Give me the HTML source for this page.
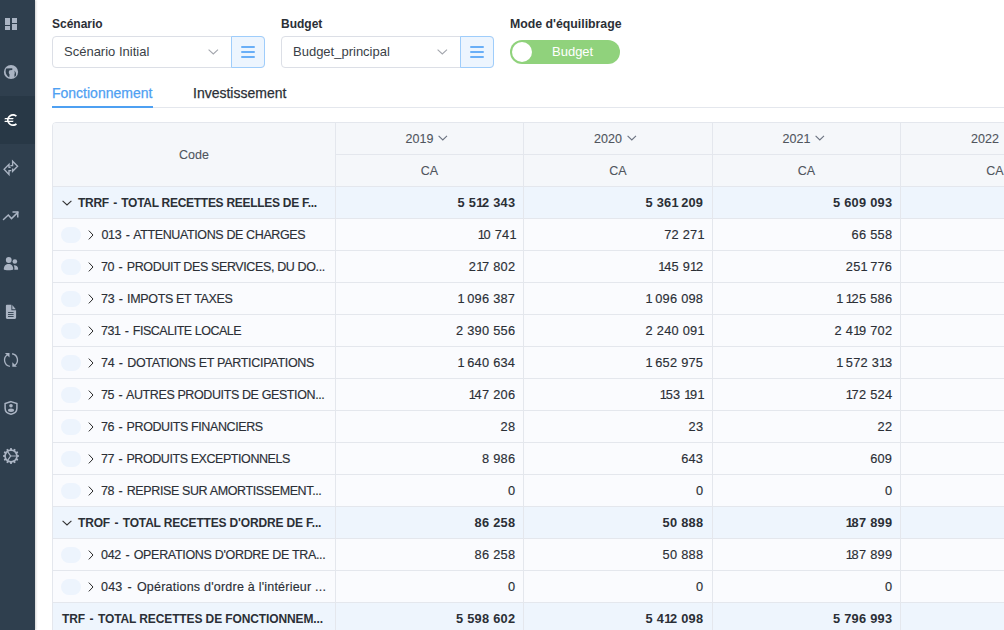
<!DOCTYPE html>
<html><head><meta charset="utf-8">
<style>
*{box-sizing:border-box;margin:0;padding:0}
html,body{width:1004px;height:630px;overflow:hidden;background:#fff;font-family:"Liberation Sans",sans-serif;color:#2b2f36}
#side{position:absolute;left:0;top:0;width:35px;height:630px;background:#2f3f4e;box-shadow:1px 0 2px rgba(0,0,0,.18)}
#side .act{position:absolute;left:0;top:96px;width:35px;height:48px;background:#283846}
#side svg{position:absolute;left:-1px;width:24px;height:24px}
.lbl{position:absolute;top:16px;font-size:12px;font-weight:bold;color:#2b2f36;line-height:16px}
.sel{position:absolute;top:36px;height:32px;width:213px;border:1px solid #dcdfe6;border-radius:4px;background:#fff}
.sel .txt{position:absolute;left:11px;top:0;line-height:30px;font-size:13px;color:#3a3f47}
.sel .chv{position:absolute;left:154.5px;top:12px}
.sel .btn{position:absolute;left:178px;top:-1px;width:34px;height:32px;border:1px solid #9fcdfb;border-radius:0 4px 4px 0;background:#edf5fe}
.sel .btn i{position:absolute;left:8.5px;width:14px;height:1.75px;background:#6aaff7;border-radius:1px}
.toggle{position:absolute;left:510px;top:40px;width:110px;height:24px;border-radius:12px;background:#90d27c}
.toggle .knob{position:absolute;left:2px;top:2px;width:20px;height:20px;border-radius:50%;background:#fff}
.toggle .t{position:absolute;left:42px;top:0;line-height:24px;color:#fff;font-size:13px}
.tab{position:absolute;top:84px;font-size:14px;line-height:18px;color:#2b2f36;-webkit-text-stroke:0.25px currentColor}
#tabline{position:absolute;left:52px;top:107px;width:952px;height:1px;background:#e4e7ed}
#tabact{position:absolute;left:52px;top:106px;width:101px;height:2px;background:#4ea0f2}
#tbl{position:absolute;left:52px;top:122px;width:1100px;height:600px;border:1px solid #e4e7ed;border-radius:4px;overflow:hidden;background:#fff}
.row{position:absolute;left:0;width:1100px;height:32px;border-bottom:1px solid #e4e7ed}
.vl{position:absolute;top:0;width:1px;height:600px;background:#e4e7ed}
.c{position:absolute;top:0;height:31px;line-height:33.5px;font-size:12.5px;white-space:nowrap;color:#2b2f36;-webkit-text-stroke:0.15px #2b2f36}
.c.b{-webkit-text-stroke:0}
.h{position:absolute;height:31px;line-height:32px;font-size:12.5px;white-space:nowrap;text-align:center;color:#50555d;-webkit-text-stroke:0.1px #50555d}
.h .yc{margin-left:5px;vertical-align:2px}
.num{text-align:right;font-size:12.8px;letter-spacing:0.25px;line-height:32px}
.one{font-style:normal;letter-spacing:-1.3px}
.b{font-weight:bold}
.pill{position:absolute;left:8px;width:20px;height:16px;border-radius:8px;background:#edf4fd}
.chev{position:absolute;left:35px}
.chevd{position:absolute;left:9px}
</style></head><body>
<div id="side">
 <div class="act"></div>
 <!-- dashboard -->
 <svg style="top:12px" viewBox="0 0 24 24"><path fill="#aab4c3" d="M6 6h5v7H6zM13 6h5v5h-5zM6 14h5v4H6zM13 12h5v6h-5z"/></svg>
 <!-- globe -->
 <svg style="top:60px" viewBox="0 0 24 24"><circle cx="12" cy="12" r="7.1" fill="#aab4c3"/><g fill="#2f3f4e"><path d="M7.2 8.6L13.3 8.2V9.9L10.6 10.2C9.4 11.3 9.6 13.3 10.6 14.4L10.3 17.2C8.3 16.3 6.7 14 6.6 11.4 6.6 10.4 6.8 9.4 7.2 8.6z"/><path d="M15.3 10.4C16.6 11.5 17.3 13.3 17 15.2 16.7 16.1 16.3 16.6 15.5 17.1L15.4 14.6C15.9 13.4 15.9 12.1 15.3 10.4z"/></g></svg>
 <!-- euro -->
 <svg style="top:108px" viewBox="0 0 24 24"><g transform="translate(4 4) scale(0.6667)"><path fill="#ffffff" d="M15 18.5c-2.51 0-4.68-1.42-5.76-3.5H15l1-2H8.58c-.05-.33-.08-.66-.08-1s.03-.67.08-1H15l1-2H9.24C10.32 6.92 12.5 5.5 15 5.5c1.61 0 3.09.59 4.23 1.57L21 5.3C19.41 3.87 17.3 3 15 3c-3.92 0-7.24 2.51-8.48 6H3l-1 2h4.06c-.04.33-.06.66-.06 1s.02.67.06 1H3l-1 2h4.52c1.24 3.49 4.56 6 8.48 6 2.31 0 4.41-.87 6-2.3l-1.78-1.77c-1.13.98-2.6 1.57-4.22 1.57z"/></g></svg>
 <!-- exchange -->
 <svg style="top:156px" viewBox="0 0 24 24"><g fill="none" stroke="#aab4c3" stroke-width="1.35" stroke-linejoin="miter"><path d="M11.4 9.6H13.6V5.2L18.6 10.3 13.6 15.3V12.4"/><path d="M12.3 14.6H10V18.5L5.1 13.3 10 8.3V11.3H11.6"/></g></svg>
 <!-- trending up -->
 <svg style="top:204px" viewBox="0 0 24 24"><g fill="none" stroke="#aab4c3" stroke-width="1.5" stroke-linecap="round"><path d="M4.5 15.5L9.3 11 12.5 14.6 18.8 8.4"/></g><path fill="#aab4c3" d="M13.5 7.3H19.5V13.5H18V8.8H13.5z"/></svg>
 <!-- users -->
 <svg style="top:252px" viewBox="0 0 24 24"><g fill="#aab4c3"><circle cx="9.75" cy="8" r="2.9"/><path d="M4.8 17.5C4.8 13.8 7 12.1 9.6 12.1S14.2 13.8 14.2 17.5C14.2 18.6 4.8 18.6 4.8 17.5z"/><circle cx="15.85" cy="9.5" r="2.3"/><path d="M14.7 13.3C17.3 13.1 19.2 14.5 19.2 17.2 19.2 17.8 17.6 17.9 15.3 17.8 15.6 16.2 15.4 14.5 14.7 13.3z"/></g></svg>
 <!-- document -->
 <svg style="top:300px" viewBox="0 0 24 24"><path fill="#aab4c3" d="M7.8 4.8H12.4V10.2H17.1V17.6C17.1 18.5 16.6 19 15.9 19H8.1C7.4 19 6.9 18.5 6.9 17.6V5.8C6.9 5.2 7.3 4.8 7.8 4.8zM13.3 5.1L16.8 9.3H13.3z"/><g stroke="#2f3f4e" stroke-width="0.9"><path d="M9 12.5H14.6M9 14.5H14.6M9 16.5H14.6"/></g></svg>
 <!-- sync -->
 <svg style="top:348px" viewBox="0 0 24 24"><g fill="none" stroke="#aab4c3" stroke-width="1.3"><path d="M8.77 6.51A6.45 6.45 0 0 0 10.88 18.45"/><path d="M13.12 5.75A6.45 6.45 0 0 1 15.23 17.69"/></g><path fill="#aab4c3" d="M5.9 4.9H10.5V9.5z"/><path fill="#aab4c3" d="M17.9 18.8H13.3V14.2z"/></svg>
 <!-- shield user -->
 <svg style="top:396px" viewBox="0 0 24 24"><path fill="none" stroke="#aab4c3" stroke-width="1.5" d="M12 5.6L17.9 7.6V12.3C17.9 15.4 15.4 17.6 12 18.3 8.6 17.6 6.1 15.4 6.1 12.3V7.6z"/><circle cx="12" cy="9.8" r="1.8" fill="#aab4c3"/><ellipse cx="12" cy="14.2" rx="3" ry="1.7" fill="#aab4c3"/></svg>
 <!-- gear -->
 <svg style="top:444px" viewBox="0 0 24 24"><path fill="#aab4c3" d="M10.95 5.38 L11.23 4.04 L12.77 4.04 L13.05 5.38 L14.40 5.75 L15.32 4.72 L16.65 5.49 L16.22 6.79 L17.21 7.78 L18.51 7.35 L19.28 8.68 L18.25 9.60 L18.62 10.95 L19.96 11.23 L19.96 12.77 L18.62 13.05 L18.25 14.40 L19.28 15.32 L18.51 16.65 L17.21 16.22 L16.22 17.21 L16.65 18.51 L15.32 19.28 L14.40 18.25 L13.05 18.62 L12.77 19.96 L11.23 19.96 L10.95 18.62 L9.60 18.25 L8.68 19.28 L7.35 18.51 L7.78 17.21 L6.79 16.22 L5.49 16.65 L4.72 15.32 L5.75 14.40 L5.38 13.05 L4.04 12.77 L4.04 11.23 L5.38 10.95 L5.75 9.60 L4.72 8.68 L5.49 7.35 L6.79 7.78 L7.78 6.79 L7.35 5.49 L8.68 4.72 L9.60 5.75z"/><circle cx="12" cy="12" r="5.1" fill="#2f3f4e"/><path stroke="#8994a2" stroke-width="1.3" d="M11.4 12H17.2"/><path fill="none" stroke="#aab4c3" stroke-width="1.3" d="M8.6 7.6L11.6 12 8.6 16.4"/></svg>
</div>

<div class="lbl" style="left:52px">Scénario</div>
<div class="sel" style="left:52px"><span class="txt">Scénario Initial</span><svg class="chv" width="11" height="6" viewBox="0 0 11 6"><path d="M0.6 0.7L5.3 5 10 0.7" fill="none" stroke="#a3a6ad" stroke-width="1.1"/></svg><div class="btn"><i style="top:9px"></i><i style="top:14px"></i><i style="top:19px"></i></div></div>
<div class="lbl" style="left:281px">Budget</div>
<div class="sel" style="left:281px"><span class="txt">Budget_principal</span><svg class="chv" width="11" height="6" viewBox="0 0 11 6"><path d="M0.6 0.7L5.3 5 10 0.7" fill="none" stroke="#a3a6ad" stroke-width="1.1"/></svg><div class="btn"><i style="top:9px"></i><i style="top:14px"></i><i style="top:19px"></i></div></div>
<div class="lbl" style="left:510px;font-size:12.3px">Mode d'équilibrage</div>
<div class="toggle"><div class="knob"></div><div class="t">Budget</div></div>

<div class="tab" style="left:52px;color:#4ea0f2">Fonctionnement</div>
<div class="tab" style="left:193px">Investissement</div>
<div id="tabline"></div><div id="tabact"></div>

<div id="tbl">
<div style="position:absolute;left:0;top:0;width:1100px;height:64px;background:#f5f7fa"></div>
<div class="h" style="left:0;width:282px;top:16px">Code</div>
<div class="h" style="left:283px;width:187px;top:0;padding-right:5px"><span class="yr">2019</span><svg class="yc" width="10" height="6" viewBox="0 0 10 6"><path d="M0.6 0.8 L4.8 4.9 L9 0.8" fill="none" stroke="#6b7280" stroke-width="1.1"/></svg></div>
<div style="position:absolute;left:283px;top:31px;width:187px;height:1px;background:#e4e7ed"></div>
<div class="h" style="left:283px;width:187px;top:32px">CA</div>
<div class="h" style="left:471px;width:188px;top:0;padding-right:5px"><span class="yr">2020</span><svg class="yc" width="10" height="6" viewBox="0 0 10 6"><path d="M0.6 0.8 L4.8 4.9 L9 0.8" fill="none" stroke="#6b7280" stroke-width="1.1"/></svg></div>
<div style="position:absolute;left:471px;top:31px;width:188px;height:1px;background:#e4e7ed"></div>
<div class="h" style="left:471px;width:188px;top:32px">CA</div>
<div class="h" style="left:660px;width:187px;top:0;padding-right:5px"><span class="yr">2021</span><svg class="yc" width="10" height="6" viewBox="0 0 10 6"><path d="M0.6 0.8 L4.8 4.9 L9 0.8" fill="none" stroke="#6b7280" stroke-width="1.1"/></svg></div>
<div style="position:absolute;left:660px;top:31px;width:187px;height:1px;background:#e4e7ed"></div>
<div class="h" style="left:660px;width:187px;top:32px">CA</div>
<div class="h" style="left:848px;width:188px;top:0;padding-right:5px"><span class="yr">2022</span><svg class="yc" width="10" height="6" viewBox="0 0 10 6"><path d="M0.6 0.8 L4.8 4.9 L9 0.8" fill="none" stroke="#6b7280" stroke-width="1.1"/></svg></div>
<div style="position:absolute;left:848px;top:31px;width:188px;height:1px;background:#e4e7ed"></div>
<div class="h" style="left:848px;width:188px;top:32px">CA</div>
<div style="position:absolute;left:0;top:63px;width:1100px;height:1px;background:#e4e7ed"></div>
<div class="row" style="top:64px;background:#eef5fd"></div>
<svg class="chevd" style="top:77px" width="10" height="6" viewBox="0 0 10 6"><path d="M0.6 0.8 L5 5 L9.4 0.8" fill="none" stroke="#333" stroke-width="1.1"/></svg>
<div class="c b" style="left:25.00px;top:64px;letter-spacing:-0.282px;font-size:12px">TRRF <span style="margin:0 1.3px">-</span> TOTAL RECETTES REELLES DE F...</div>
<div class="c num b" style="left:103px;width:359.25px;top:64px">5 5<i class="one">1</i>2 343</div>
<div class="c num b" style="left:291px;width:359.25px;top:64px">5 36<i class="one">1</i> 209</div>
<div class="c num b" style="left:480px;width:359.25px;top:64px">5 609 093</div>
<div class="row" style="top:96px;background:#fafbfe"></div>
<div class="pill" style="top:104px"></div>
<svg class="chev" style="top:107px" width="6" height="10" viewBox="0 0 6 10"><path d="M0.8 0.6 L5 5 L0.8 9.4" fill="none" stroke="#2a2a2a" stroke-width="1"/></svg>
<div class="c" style="left:48.50px;top:96px;letter-spacing:-0.376px">013 <span style="margin:0 1.3px">-</span> ATTENUATIONS DE CHARGES</div>
<div class="c num" style="left:103px;width:359.25px;top:96px"><i class="one">1</i>0 74<i class="one">1</i></div>
<div class="c num" style="left:291px;width:359.25px;top:96px">72 27<i class="one">1</i></div>
<div class="c num" style="left:480px;width:359.25px;top:96px">66 558</div>
<div class="row" style="top:128px;background:#fafbfe"></div>
<div class="pill" style="top:136px"></div>
<svg class="chev" style="top:139px" width="6" height="10" viewBox="0 0 6 10"><path d="M0.8 0.6 L5 5 L0.8 9.4" fill="none" stroke="#2a2a2a" stroke-width="1"/></svg>
<div class="c" style="left:48.00px;top:128px;letter-spacing:-0.373px">70 <span style="margin:0 1.3px">-</span> PRODUIT DES SERVICES, DU DO...</div>
<div class="c num" style="left:103px;width:359.25px;top:128px">2<i class="one">1</i>7 802</div>
<div class="c num" style="left:291px;width:359.25px;top:128px"><i class="one">1</i>45 9<i class="one">1</i>2</div>
<div class="c num" style="left:480px;width:359.25px;top:128px">25<i class="one">1</i> 776</div>
<div class="row" style="top:160px;background:#fafbfe"></div>
<div class="pill" style="top:168px"></div>
<svg class="chev" style="top:171px" width="6" height="10" viewBox="0 0 6 10"><path d="M0.8 0.6 L5 5 L0.8 9.4" fill="none" stroke="#2a2a2a" stroke-width="1"/></svg>
<div class="c" style="left:48.00px;top:160px;letter-spacing:-0.325px">73 <span style="margin:0 1.3px">-</span> IMPOTS ET TAXES</div>
<div class="c num" style="left:103px;width:359.25px;top:160px"><i class="one">1</i> 096 387</div>
<div class="c num" style="left:291px;width:359.25px;top:160px"><i class="one">1</i> 096 098</div>
<div class="c num" style="left:480px;width:359.25px;top:160px"><i class="one">1</i> <i class="one">1</i>25 586</div>
<div class="row" style="top:192px;background:#fafbfe"></div>
<div class="pill" style="top:200px"></div>
<svg class="chev" style="top:203px" width="6" height="10" viewBox="0 0 6 10"><path d="M0.8 0.6 L5 5 L0.8 9.4" fill="none" stroke="#2a2a2a" stroke-width="1"/></svg>
<div class="c" style="left:48.00px;top:192px;letter-spacing:-0.473px">731 <span style="margin:0 1.3px">-</span> FISCALITE LOCALE</div>
<div class="c num" style="left:103px;width:359.25px;top:192px">2 390 556</div>
<div class="c num" style="left:291px;width:359.25px;top:192px">2 240 09<i class="one">1</i></div>
<div class="c num" style="left:480px;width:359.25px;top:192px">2 4<i class="one">1</i>9 702</div>
<div class="row" style="top:224px;background:#fafbfe"></div>
<div class="pill" style="top:232px"></div>
<svg class="chev" style="top:235px" width="6" height="10" viewBox="0 0 6 10"><path d="M0.8 0.6 L5 5 L0.8 9.4" fill="none" stroke="#2a2a2a" stroke-width="1"/></svg>
<div class="c" style="left:48.00px;top:224px;letter-spacing:-0.294px">74 <span style="margin:0 1.3px">-</span> DOTATIONS ET PARTICIPATIONS</div>
<div class="c num" style="left:103px;width:359.25px;top:224px"><i class="one">1</i> 640 634</div>
<div class="c num" style="left:291px;width:359.25px;top:224px"><i class="one">1</i> 652 975</div>
<div class="c num" style="left:480px;width:359.25px;top:224px"><i class="one">1</i> 572 3<i class="one">1</i>3</div>
<div class="row" style="top:256px;background:#fafbfe"></div>
<div class="pill" style="top:264px"></div>
<svg class="chev" style="top:267px" width="6" height="10" viewBox="0 0 6 10"><path d="M0.8 0.6 L5 5 L0.8 9.4" fill="none" stroke="#2a2a2a" stroke-width="1"/></svg>
<div class="c" style="left:48.00px;top:256px;letter-spacing:-0.391px">75 <span style="margin:0 1.3px">-</span> AUTRES PRODUITS DE GESTION...</div>
<div class="c num" style="left:103px;width:359.25px;top:256px"><i class="one">1</i>47 206</div>
<div class="c num" style="left:291px;width:359.25px;top:256px"><i class="one">1</i>53 <i class="one">1</i>9<i class="one">1</i></div>
<div class="c num" style="left:480px;width:359.25px;top:256px"><i class="one">1</i>72 524</div>
<div class="row" style="top:288px;background:#fafbfe"></div>
<div class="pill" style="top:296px"></div>
<svg class="chev" style="top:299px" width="6" height="10" viewBox="0 0 6 10"><path d="M0.8 0.6 L5 5 L0.8 9.4" fill="none" stroke="#2a2a2a" stroke-width="1"/></svg>
<div class="c" style="left:48.00px;top:288px;letter-spacing:-0.402px">76 <span style="margin:0 1.3px">-</span> PRODUITS FINANCIERS</div>
<div class="c num" style="left:103px;width:359.25px;top:288px">28</div>
<div class="c num" style="left:291px;width:359.25px;top:288px">23</div>
<div class="c num" style="left:480px;width:359.25px;top:288px">22</div>
<div class="row" style="top:320px;background:#fafbfe"></div>
<div class="pill" style="top:328px"></div>
<svg class="chev" style="top:331px" width="6" height="10" viewBox="0 0 6 10"><path d="M0.8 0.6 L5 5 L0.8 9.4" fill="none" stroke="#2a2a2a" stroke-width="1"/></svg>
<div class="c" style="left:48.00px;top:320px;letter-spacing:-0.432px">77 <span style="margin:0 1.3px">-</span> PRODUITS EXCEPTIONNELS</div>
<div class="c num" style="left:103px;width:359.25px;top:320px">8 986</div>
<div class="c num" style="left:291px;width:359.25px;top:320px">643</div>
<div class="c num" style="left:480px;width:359.25px;top:320px">609</div>
<div class="row" style="top:352px;background:#fafbfe"></div>
<div class="pill" style="top:360px"></div>
<svg class="chev" style="top:363px" width="6" height="10" viewBox="0 0 6 10"><path d="M0.8 0.6 L5 5 L0.8 9.4" fill="none" stroke="#2a2a2a" stroke-width="1"/></svg>
<div class="c" style="left:48.00px;top:352px;letter-spacing:-0.381px">78 <span style="margin:0 1.3px">-</span> REPRISE SUR AMORTISSEMENT...</div>
<div class="c num" style="left:103px;width:359.25px;top:352px">0</div>
<div class="c num" style="left:291px;width:359.25px;top:352px">0</div>
<div class="c num" style="left:480px;width:359.25px;top:352px">0</div>
<div class="row" style="top:384px;background:#eef5fd"></div>
<svg class="chevd" style="top:397px" width="10" height="6" viewBox="0 0 10 6"><path d="M0.6 0.8 L5 5 L9.4 0.8" fill="none" stroke="#333" stroke-width="1.1"/></svg>
<div class="c b" style="left:25.00px;top:384px;letter-spacing:-0.168px;font-size:12px">TROF <span style="margin:0 1.3px">-</span> TOTAL RECETTES D'ORDRE DE F...</div>
<div class="c num b" style="left:103px;width:359.25px;top:384px">86 258</div>
<div class="c num b" style="left:291px;width:359.25px;top:384px">50 888</div>
<div class="c num b" style="left:480px;width:359.25px;top:384px"><i class="one">1</i>87 899</div>
<div class="row" style="top:416px;background:#fafbfe"></div>
<div class="pill" style="top:424px"></div>
<svg class="chev" style="top:427px" width="6" height="10" viewBox="0 0 6 10"><path d="M0.8 0.6 L5 5 L0.8 9.4" fill="none" stroke="#2a2a2a" stroke-width="1"/></svg>
<div class="c" style="left:48.00px;top:416px;letter-spacing:-0.315px">042 <span style="margin:0 1.3px">-</span> OPERATIONS D'ORDRE DE TRA...</div>
<div class="c num" style="left:103px;width:359.25px;top:416px">86 258</div>
<div class="c num" style="left:291px;width:359.25px;top:416px">50 888</div>
<div class="c num" style="left:480px;width:359.25px;top:416px"><i class="one">1</i>87 899</div>
<div class="row" style="top:448px;background:#fafbfe"></div>
<div class="pill" style="top:456px"></div>
<svg class="chev" style="top:459px" width="6" height="10" viewBox="0 0 6 10"><path d="M0.8 0.6 L5 5 L0.8 9.4" fill="none" stroke="#2a2a2a" stroke-width="1"/></svg>
<div class="c" style="left:48.00px;top:448px;letter-spacing:0.223px">043 <span style="margin:0 1.3px">-</span> Opérations d'ordre à l'intérieur ...</div>
<div class="c num" style="left:103px;width:359.25px;top:448px">0</div>
<div class="c num" style="left:291px;width:359.25px;top:448px">0</div>
<div class="c num" style="left:480px;width:359.25px;top:448px">0</div>
<div class="row" style="top:480px;background:#eef5fd"></div>
<div class="c b" style="left:9.00px;top:480px;letter-spacing:-0.112px;font-size:12px">TRF <span style="margin:0 1.3px">-</span> TOTAL RECETTES DE FONCTIONNEM...</div>
<div class="c num b" style="left:103px;width:359.25px;top:480px">5 598 602</div>
<div class="c num b" style="left:291px;width:359.25px;top:480px">5 4<i class="one">1</i>2 098</div>
<div class="c num b" style="left:480px;width:359.25px;top:480px">5 796 993</div>
<div class="vl" style="left:282px"></div>
<div class="vl" style="left:470px"></div>
<div class="vl" style="left:659px"></div>
<div class="vl" style="left:847px"></div>
</div>
</body></html>
